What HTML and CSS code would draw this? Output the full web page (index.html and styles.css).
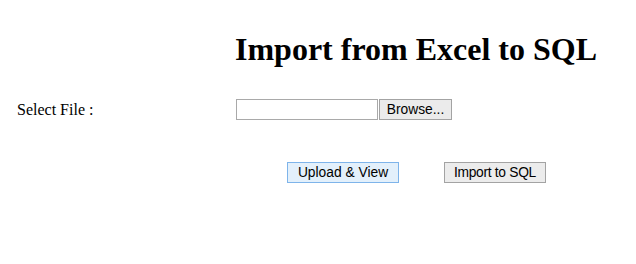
FILE: index.html
```html
<!DOCTYPE html>
<html lang="en">
<head>
    <meta charset="UTF-8">
    <title>Import from Excel to SQL</title>
    <link rel="stylesheet" href="styles.css">
</head>
<body>
    <div class="form">
        <div class="row">
            <div class="label"></div>
            <h1 class="title">Import from Excel to SQL</h1>
        </div>
        <div class="row file-row">
            <div class="label">Select File :</div>
            <div class="file">
                <span class="file-box"></span><button class="btn browse" type="button">Browse...</button>
            </div>
        </div>
        <div class="row action-row">
            <div class="label"></div>
            <div class="actions">
                <button class="btn upload" type="button">Upload &amp; View</button>
                <button class="btn import" type="button">Import to SQL</button>
            </div>
        </div>
    </div>
</body>
</html>
```

FILE: styles.css
```css
html, body { margin: 0; padding: 0; background: #ffffff; }
body { font-family: "Liberation Serif", "Times New Roman", serif; font-size: 16px; color: #000000; }
.form { padding: 0 0 0 17px; }
.row { display: flex; align-items: center; }
.label { width: 219px; flex: none; }
.title { margin: 31px 0 0 -1px; font-size: 32px; font-weight: bold; line-height: 37px; }
.file-row { margin-top: 31px; }
.file { display: flex; }
.file-box { width: 140px; height: 19px; border: 1px solid #a9a9a9; background: #ffffff; }
.btn { font-family: "Liberation Sans", Arial, sans-serif; font-size: 13.8px; color: #000000; height: 21px; padding: 0 2px; margin: 0; box-sizing: border-box; line-height: 19px; white-space: nowrap; }
.browse { width: 73px; margin-left: 1px; background: #ebebeb; border: 1px solid #a3a3a3; }
.action-row { margin-top: 42px; }
.actions { display: flex; padding-left: 51px; }
.upload { width: 112px; background: #e3f0fb; border: 1px solid #7eb4ea; }
.import { width: 102px; margin-left: 45px; background: #ececec; border: 1px solid #a3a3a3; letter-spacing: -0.3px; }
```
